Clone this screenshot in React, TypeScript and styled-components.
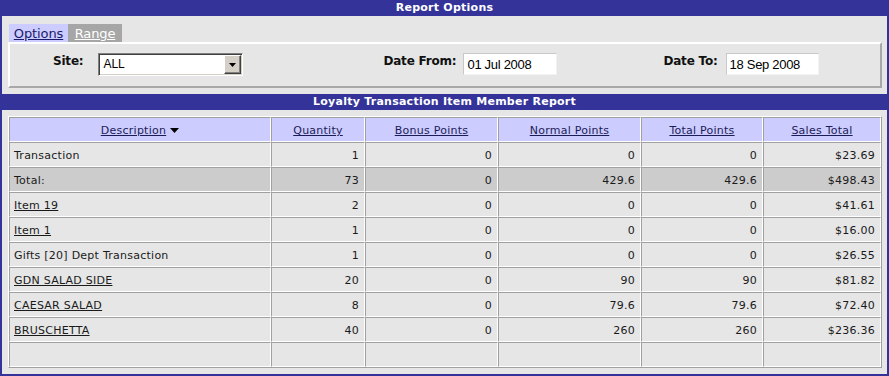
import React from "react";
import styled, { createGlobalStyle } from "styled-components";

const Global = createGlobalStyle`
  html, body { margin: 0; padding: 0; background: #ffffff; }
  body { font-family: "DejaVu Sans", Verdana, sans-serif; }
`;

const Frame = styled.div`
  box-sizing: border-box;
  width: 889px;
  height: 376px;
  border: 2px solid #333399;
  border-top: 0;
  background: #e6e6e6;
  display: flex;
  flex-direction: column;
`;

const Bar = styled.div<{ $mt?: number }>`
  height: 16px;
  margin-top: ${(p) => p.$mt ?? 0}px;
  background: #333399;
  color: #ffffff;
  font: bold 11px "DejaVu Sans", Verdana, sans-serif;
  letter-spacing: 0.25px;
  line-height: 16px;
  text-align: center;
`;

const Tabs = styled.div`
  display: flex;
  margin: 8px 0 0 7px;
  height: 18px;
`;

const Tab = styled.a<{ $active?: boolean; $w: number }>`
  box-sizing: border-box;
  width: ${(p) => p.$w}px;
  height: 18px;
  display: flex;
  align-items: center;
  justify-content: center;
  padding-top: 1px;
  background: ${(p) => (p.$active ? "#ccccff" : "#a6a6a6")};
  color: ${(p) => (p.$active ? "#1a1a6b" : "#ffffff")};
  font: 13px "DejaVu Sans", Verdana, sans-serif;
  letter-spacing: -0.1px;
  text-decoration: underline;
  cursor: pointer;
`;

const OptionsBox = styled.div`
  box-sizing: border-box;
  height: 46px;
  margin: 0 5px 0 6px;
  border: 2px solid;
  border-color: #ffffff #a8a8a8 #a8a8a8 #ffffff;
  display: flex;
  align-items: flex-start;
  padding: 9px 0 0 43px;
`;

const Field = styled.div<{ $ml: number; $gap: number }>`
  display: flex;
  align-items: flex-start;
  margin-left: ${(p) => p.$ml}px;
  gap: ${(p) => p.$gap}px;
`;

const Label = styled.span`
  font: bold 12px "DejaVu Sans", Verdana, sans-serif;
  letter-spacing: -0.2px;
  line-height: 16px;
  color: #111111;
  white-space: nowrap;
`;

const SelectBox = styled.div`
  box-sizing: border-box;
  width: 145px;
  height: 23px;
  display: flex;
  align-items: stretch;
  background: #ffffff;
  border: 1px solid;
  border-color: #808080 #ffffff #ffffff #808080;
  box-shadow: inset 1px 1px 0 #404040, inset -1px -1px 0 #d4d0c8;
  padding: 1px;
`;

const SelectText = styled.span`
  flex: 1;
  padding-left: 3px;
  font: 12px "Liberation Sans", Arial, sans-serif;
  line-height: 19px;
  color: #000000;
`;

const DropButton = styled.span`
  box-sizing: border-box;
  width: 17px;
  display: flex;
  align-items: center;
  justify-content: center;
  background: #d4d0c8;
  border: 1px solid;
  border-color: #ffffff #404040 #404040 #ffffff;
  box-shadow: inset -1px -1px 0 #808080;
`;

const DateInput = styled.input<{ $w: number }>`
  box-sizing: border-box;
  width: ${(p) => p.$w}px;
  height: 22px;
  margin: 0;
  padding: 0 0 0 3px;
  border: 1px solid;
  border-color: #c8c8c8 #f2f2f2 #f2f2f2 #c8c8c8;
  background: #ffffff;
  font: 13px "Liberation Sans", Arial, sans-serif;
  letter-spacing: -0.3px;
  color: #000000;
  outline: none;
`;

const Table = styled.table`
  width: 874px;
  margin: 6px 5px 0 6px;
  border-spacing: 0;
  border-collapse: separate;
  table-layout: fixed;
  border: 1px solid;
  border-color: #ffffff #a0a0a0 #a0a0a0 #ffffff;
  font: 11px "DejaVu Sans", Verdana, sans-serif;
  letter-spacing: 0.25px;
  color: #1a1a1a;
`;

const Col = styled.col<{ $w: number }>`
  width: ${(p) => p.$w}px;
`;

const Th = styled.th`
  padding: 2px 4px 0;
  line-height: 21px;
  background: #ccccff;
  font-weight: normal;
  text-align: center;
  white-space: nowrap;
  border: 1px solid;
  border-color: #a0a0a0 #ffffff #ffffff #a0a0a0;
`;

const HeadLink = styled.a`
  color: #1c1c58;
  text-decoration: underline;
  cursor: pointer;
`;

const SortArrow = styled.svg`
  margin-left: 4px;
  vertical-align: 1px;
`;

const Td = styled.td<{ $num?: boolean; $total?: boolean }>`
  padding: 2px 5px 0 ${(p) => (p.$num ? 5 : 4)}px;
  line-height: 21px;
  text-align: ${(p) => (p.$num ? "right" : "left")};
  background: ${(p) => (p.$total ? "#cccccc" : "#e6e6e6")};
  white-space: nowrap;
  overflow: hidden;
  border: 1px solid;
  border-color: #a0a0a0 #ffffff #ffffff #a0a0a0;
`;

const RowLink = styled.a`
  color: #1a1a1a;
  text-decoration: underline;
  cursor: pointer;
`;

type Row = {
  name: string;
  link?: boolean;
  total?: boolean;
  values: string[];
};

const columns = [
  { label: "Description", w: 262 },
  { label: "Quantity", w: 94 },
  { label: "Bonus Points", w: 133 },
  { label: "Normal Points", w: 143 },
  { label: "Total Points", w: 122 },
  { label: "Sales Total", w: 118 },
];

const rows: Row[] = [
  { name: "Transaction", values: ["1", "0", "0", "0", "$23.69"] },
  { name: "Total:", total: true, values: ["73", "0", "429.6", "429.6", "$498.43"] },
  { name: "Item 19", link: true, values: ["2", "0", "0", "0", "$41.61"] },
  { name: "Item 1", link: true, values: ["1", "0", "0", "0", "$16.00"] },
  { name: "Gifts [20] Dept Transaction", values: ["1", "0", "0", "0", "$26.55"] },
  { name: "GDN SALAD SIDE", link: true, values: ["20", "0", "90", "90", "$81.82"] },
  { name: "CAESAR SALAD", link: true, values: ["8", "0", "79.6", "79.6", "$72.40"] },
  { name: "BRUSCHETTA", link: true, values: ["40", "0", "260", "260", "$236.36"] },
];

export default function App() {
  return (
    <>
      <Global />
      <Frame>
        <Bar>Report Options</Bar>
        <Tabs>
          <Tab $active $w={59}>Options</Tab>
          <Tab $w={54}>Range</Tab>
        </Tabs>
        <OptionsBox>
          <Field $ml={0} $gap={15}>
            <Label>Site:</Label>
            <SelectBox>
              <SelectText>ALL</SelectText>
              <DropButton>
                <svg width="7" height="4" viewBox="0 0 7 4">
                  <path d="M0 0h7L3.5 4z" fill="#000" />
                </svg>
              </DropButton>
            </SelectBox>
          </Field>
          <Field $ml={140} $gap={7}>
            <Label>Date From:</Label>
            <DateInput $w={94} readOnly value="01 Jul 2008" />
          </Field>
          <Field $ml={106} $gap={8}>
            <Label>Date To:</Label>
            <DateInput $w={93} readOnly value="18 Sep 2008" />
          </Field>
        </OptionsBox>
        <Bar $mt={6}>Loyalty Transaction Item Member Report</Bar>
        <Table>
          <colgroup>
            {columns.map((c) => (
              <Col key={c.label} $w={c.w} />
            ))}
          </colgroup>
          <thead>
            <tr>
              {columns.map((c, i) => (
                <Th key={c.label}>
                  <HeadLink>{c.label}</HeadLink>
                  {i === 0 && (
                    <SortArrow width="9" height="5" viewBox="0 0 9 5">
                      <path d="M0 0h9L4.5 5z" fill="#000" />
                    </SortArrow>
                  )}
                </Th>
              ))}
            </tr>
          </thead>
          <tbody>
            {rows.map((r) => (
              <tr key={r.name}>
                <Td $total={r.total}>
                  {r.link ? <RowLink>{r.name}</RowLink> : r.name}
                </Td>
                {r.values.map((v, i) => (
                  <Td key={i} $num $total={r.total}>
                    {v}
                  </Td>
                ))}
              </tr>
            ))}
            <tr>
              {columns.map((c) => (
                <Td key={c.label}>&nbsp;</Td>
              ))}
            </tr>
          </tbody>
        </Table>
      </Frame>
    </>
  );
}
